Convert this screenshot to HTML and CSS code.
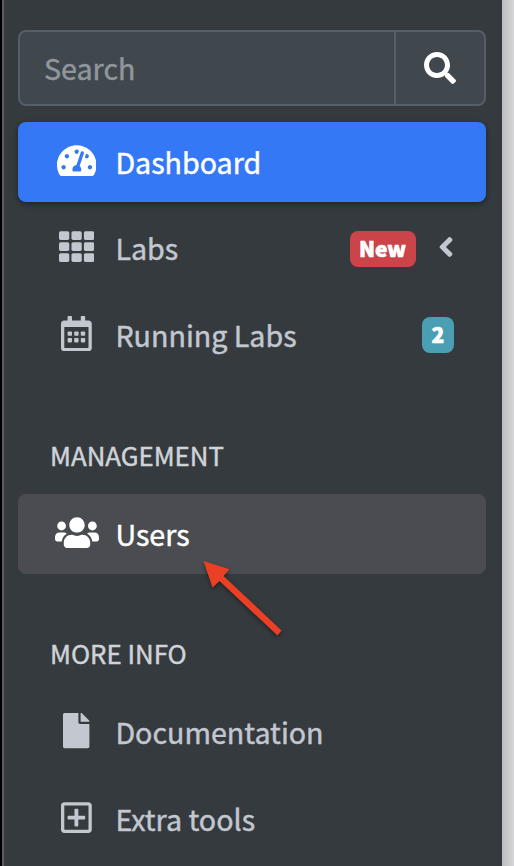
FILE: index.html
```html
<!DOCTYPE html>
<html lang="en">
<head>
<meta charset="utf-8">
<title>Sidebar</title>
<link rel="stylesheet" href="styles.css">
</head>
<body>
<div class="edge"></div>
<aside class="sidebar">
  <form class="search">
    <input class="search-input" type="text" placeholder="Search" aria-label="Search">
    <button class="search-button" type="button" aria-label="Submit search">
      <svg width="32" height="32" viewBox="0 0 512 512"><path d="M505 442.700L405.300 343c-4.500-4.500-10.600-7-17-7H372c27.600-35.300 44-79.700 44-128C416 93.100 322.900 0 208 0S0 93.100 0 208s93.100 208 208 208c48.300 0 92.700-16.400 128-44v16.300c0 6.400 2.500 12.500 7 17l99.700 99.700c9.400 9.400 24.600 9.400 33.900 0l28.300-28.300c9.400-9.400 9.400-24.600.1-34zM208 336c-70.700 0-128-57.200-128-128 0-70.700 57.200-128 128-128 70.700 0 128 57.200 128 128 0 70.700-57.200 128-128 128z"/></svg>
    </button>
  </form>
  <nav class="nav">
    <a class="item active">
      <span class="icon"><svg viewBox="0 0 576 512"><path d="M288 32C128.940 32 0 160.940 0 320c0 52.800 14.250 102.260 39.060 144.800 5.610 9.620 16.300 15.200 27.440 15.200h443c11.140 0 21.830-5.580 27.440-15.200C561.750 422.260 576 372.800 576 320c0-159.060-128.940-288-288-288zm0 64c14.710 0 26.580 10.130 30.320 23.650-1.110 2.260-2.640 4.230-3.450 6.670l-9.220 27.670c-5.130 3.490-10.970 6.010-17.640 6.010-17.670 0-32-14.330-32-32S270.330 96 288 96zM96 384c-17.670 0-32-14.330-32-32s14.330-32 32-32 32 14.330 32 32-14.330 32-32 32zm48-160c-17.670 0-32-14.330-32-32s14.330-32 32-32 32 14.330 32 32-14.330 32-32 32zm246.770-72.410l-61.330 184C343.130 347.330 352 364.540 352 384c0 11.720-3.380 22.550-8.880 32H232.880c-5.500-9.450-8.880-20.280-8.880-32 0-33.940 26.500-61.430 59.900-63.590l61.340-184.010c4.170-12.560 17.730-19.450 30.360-15.170 12.570 4.190 19.350 17.790 15.170 30.360zm14.660 57.200l15.520-46.550c3.470-1.290 7.130-2.230 11.050-2.230 17.670 0 32 14.330 32 32s-14.330 32-32 32c-11.380-.010-20.890-6.280-26.570-15.220zM480 384c-17.670 0-32-14.330-32-32s14.330-32 32-32 32 14.330 32 32-14.330 32-32 32z"/></svg></span>
      <span class="label">Dashboard</span>
    </a>
    <a class="item">
      <span class="icon"><svg viewBox="0 0 512 512"><g><rect y="32" width="149.300" height="128" rx="24"/><rect x="181.300" y="32" width="149.300" height="128" rx="24"/><rect x="362.700" y="32" width="149.300" height="128" rx="24"/><rect y="192" width="149.300" height="128" rx="24"/><rect x="181.300" y="192" width="149.300" height="128" rx="24"/><rect x="362.700" y="192" width="149.300" height="128" rx="24"/><rect y="352" width="149.300" height="128" rx="24"/><rect x="181.300" y="352" width="149.300" height="128" rx="24"/><rect x="362.700" y="352" width="149.300" height="128" rx="24"/></g></svg></span>
      <span class="label">Labs</span>
      <span class="badge danger">New</span>
      <svg class="chevron" viewBox="0 0 256 512"><path d="M31.700 239l136-136c9.400-9.400 24.600-9.400 33.900 0l22.600 22.600c9.400 9.400 9.400 24.600 0 33.900L127.900 256l96.400 96.400c9.400 9.400 9.400 24.600 0 33.900L201.700 409c-9.400 9.400-24.600 9.400-33.900 0l-136-136c-9.500-9.400-9.500-24.600-.1-34z"/></svg>
    </a>
    <a class="item">
      <span class="icon"><svg viewBox="0 0 448 512"><path fill-rule="evenodd" d="M400 64h-48V12c0-6.600-5.400-12-12-12h-40c-6.600 0-12 5.400-12 12v52H160V12c0-6.600-5.400-12-12-12h-40c-6.600 0-12 5.400-12 12v52H48C21.500 64 0 85.500 0 112v352c0 26.500 21.500 48 48 48h352c26.500 0 48-21.500 48-48V112c0-26.500-21.500-48-48-48zM48 160h352v298c0 3.300-2.700 6-6 6H54c-3.300 0-6-2.700-6-6z"/><rect x="96" y="224" width="64" height="64" rx="12"/><rect x="192" y="224" width="64" height="64" rx="12"/><rect x="288" y="224" width="64" height="64" rx="12"/><rect x="96" y="320" width="64" height="64" rx="12"/><rect x="192" y="320" width="64" height="64" rx="12"/><rect x="288" y="320" width="64" height="64" rx="12"/></svg></span>
      <span class="label">Running Labs</span>
      <span class="badge info">2</span>
    </a>
    <h2 class="heading management">MANAGEMENT</h2>
    <a class="item hovered">
      <span class="icon"><svg viewBox="0 0 640 512"><path d="M96 224c35.300 0 64-28.700 64-64s-28.700-64-64-64-64 28.700-64 64 28.700 64 64 64zm448 0c35.300 0 64-28.700 64-64s-28.700-64-64-64-64 28.700-64 64 28.700 64 64 64zm32 32h-64c-17.600 0-33.500 7.100-45.100 18.600 40.300 22.100 68.900 62 75.100 109.400h66c17.700 0 32-14.300 32-32v-32c0-35.300-28.700-64-64-64zm-256 0c61.900 0 112-50.100 112-112S381.900 32 320 32 208 82.100 208 144s50.100 112 112 112zm76.800 32h-8.300c-20.800 10-43.900 16-68.500 16s-47.600-6-68.500-16h-8.300C179.600 288 128 339.600 128 403.200V432c0 26.500 21.500 48 48 48h288c26.500 0 48-21.500 48-48v-28.800c0-63.600-51.600-115.200-115.200-115.200zm-223.700-13.400C161.500 263.100 145.600 256 128 256H64c-35.300 0-64 28.700-64 64v32c0 17.700 14.300 32 32 32h65.900c6.300-47.400 34.900-87.300 75.200-109.400z"/></svg></span>
      <span class="label">Users</span>
    </a>
    <h2 class="heading more">MORE INFO</h2>
    <a class="item">
      <span class="icon"><svg viewBox="0 0 384 512"><path d="M224 136V0H24C10.700 0 0 10.700 0 24v464c0 13.300 10.700 24 24 24h336c13.300 0 24-10.700 24-24V160H248c-13.200 0-24-10.800-24-24zm160-14.100v6.100H256V0h6.100c6.400 0 12.500 2.500 17 7l97.900 98c4.500 4.500 7 10.600 7 16.900z"/></svg></span>
      <span class="label">Documentation</span>
    </a>
    <a class="item">
      <span class="icon"><svg viewBox="0 0 448 512"><path d="M352 240v32c0 6.600-5.400 12-12 12h-88v88c0 6.600-5.400 12-12 12h-32c-6.600 0-12-5.400-12-12v-88h-88c-6.600 0-12-5.400-12-12v-32c0-6.600 5.400-12 12-12h88v-88c0-6.600 5.400-12 12-12h32c6.600 0 12 5.400 12 12v88h88c6.600 0 12 5.400 12 12zm96-160v352c0 26.500-21.500 48-48 48H48c-26.500 0-48-21.500-48-48V80c0-26.500 21.500-48 48-48h352c26.500 0 48 21.500 48 48zm-48 346V86c0-3.300-2.700-6-6-6H54c-3.300 0-6 2.700-6 6v340c0 3.300 2.700 6 6 6h340c3.300 0 6-2.700 6-6z"/></svg></span>
      <span class="label">Extra tools</span>
    </a>
  </nav>
</aside>
<div class="content-edge"></div>
<svg class="pointer" viewBox="0 0 100 92"><path d="M8.500 5L34.500 13.300 28.500 20 86.500 74.500 82.500 79.500 24.500 25 17.500 31.500Z"/></svg>
</body>
</html>
```

FILE: styles.css
```css
* { box-sizing: border-box; }

body {
  margin: 0;
  height: 866px;
  display: flex;
  overflow: hidden;
  position: relative;
  background: #353a3e;
  color: #c2c7d0;
  font-family: "Noto Sans CJK SC", "Noto Sans", sans-serif;
  font-size: 28.65px;
  -webkit-text-stroke: .45px currentColor;
}

svg { display: block; fill: currentColor; }

.edge {
  width: 4px;
  background: #000;
  border-right: 2px solid #5b5e63;
}

.sidebar {
  width: 498px;
  padding: 30px 16px 0 14px;
}

.content-edge {
  width: 12px;
  background: linear-gradient(90deg, #bdbdbe, #d5d5d9);
}

.search {
  display: flex;
  height: 76px;
  margin: 0 0 16px;
  border: 2px solid #565e67;
  border-radius: 8px;
  background: #40474d;
  overflow: hidden;
}

.search-input {
  flex: 1;
  min-width: 0;
  padding: 0 24px 1px;
  border: 0;
  background: none;
  color: #fff;
  font: inherit;
  -webkit-text-stroke: .45px #90969d;
}

.search-input::placeholder { color: #90969d; opacity: 1; }

.search-button {
  width: 90px;
  padding: 0;
  border: 0;
  border-left: 2px solid #565e67;
  background: none;
  color: #fff;
  display: grid;
  place-items: center;
}

.item {
  display: flex;
  align-items: center;
  height: 80px;
  margin-bottom: 6.4px;
  padding: 0 32px;
  border-radius: 8px;
}

.active {
  background: #3478f6;
  color: #fff;
  box-shadow: 0 2px 6px rgba(0, 0, 0, .24), 0 2px 4px rgba(0, 0, 0, .2);
}

.hovered { background: #4a4c51; color: #fff; }

.icon {
  width: 53.2px;
  margin-right: 12.2px;
  display: flex;
  justify-content: center;
  padding-bottom: 2.8px;
}

.icon svg { height: 35.2px; }

.label { line-height: 48px; }

.badge {
  height: 36px;
  margin-left: auto;
  margin-top: 1px;
  padding: 0 9px;
  border-radius: 8px;
  color: #fff;
  font-size: 21px;
  font-weight: 900;
  line-height: 34px;
  -webkit-text-stroke-width: .6px;
}

.danger { width: 66px; background: #ca444a; }
.info { width: 32px; background: #4a9fb5; text-align: center; }

.chevron { height: 32px; margin: 0 0 3px 22px; }

.heading {
  margin: 0;
  height: 112.8px;
  padding: 56px 32px 0;
  color: #d0d3d8;
  font-size: 25.8px;
  font-weight: 400;
  line-height: 36px;
}

.more { height: 112px; padding-top: 55px; }

.pointer {
  position: absolute;
  left: 195px;
  top: 555.5px;
  width: 100px;
  height: 92px;
  fill: #eb4025;
  filter: drop-shadow(0 2px 2px rgba(0, 0, 0, .4));
}
```
